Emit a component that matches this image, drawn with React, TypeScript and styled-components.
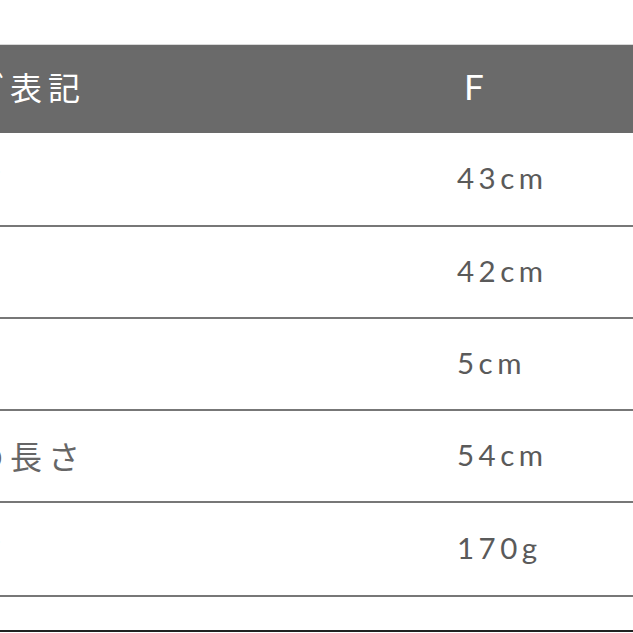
import styled, { createGlobalStyle } from "styled-components";

const GlobalStyle = createGlobalStyle`
  html, body {
    margin: 0;
    padding: 0;
    background: #fff;
    overflow: hidden;
  }
`;

const Page = styled.div`
  width: 633px;
  height: 633px;
  overflow: hidden;
  padding-top: 44px;
  box-sizing: border-box;
`;

const Table = styled.div`
  margin-left: -66px;
  width: 720px;
  border-top: 1px solid #d8d8d8;
`;

const Row = styled.div<{ $h: number; $head?: boolean }>`
  display: grid;
  grid-template-columns: 523px 1fr;
  align-items: center;
  height: ${(p) => p.$h}px;
  box-sizing: border-box;
  background: ${(p) => (p.$head ? "#6a6a6a" : "#fff")};
  border-bottom: ${(p) => (p.$head ? "none" : "2px solid #777")};
  padding-bottom: ${(p) => (p.$head ? "6px" : "3px")};
`;

const Label = styled.div<{ $head?: boolean }>`
  font-family: "Noto Sans CJK JP", sans-serif;
  font-size: 32px;
  letter-spacing: 6px;
  color: ${(p) => (p.$head ? "#fff" : "#666")};
  white-space: nowrap;
`;

const Value = styled.div<{ $head?: boolean }>`
  font-family: Lato, "Noto Sans", sans-serif;
  font-size: ${(p) => (p.$head ? "35px" : "29.5px")};
  letter-spacing: 4.5px;
  color: ${(p) => (p.$head ? "#fff" : "#5a5a5a")};
  padding-left: ${(p) => (p.$head ? "7px" : "0")};
`;

const Footer = styled.div`
  margin-top: 33px;
  border-top: 2px solid #222;
`;

const rows = [
  { label: "高さ", value: "43cm", h: 94 },
  { label: "幅", value: "42cm", h: 92 },
  { label: "厚", value: "5cm", h: 92 },
  { label: "紐の長さ", value: "54cm", h: 92 },
  { label: "重さ", value: "170g", h: 94 },
];

const App = () => {
  return (
    <>
      <GlobalStyle />
      <Page>
        <Table>
          <Row $h={88} $head>
            <Label $head>タグ表記</Label>
            <Value $head>F</Value>
          </Row>
          {rows.map((r) => (
            <Row key={r.value} $h={r.h}>
              <Label>{r.label}</Label>
              <Value>{r.value}</Value>
            </Row>
          ))}
        </Table>
        <Footer />
      </Page>
    </>
  );
};

export default App;
